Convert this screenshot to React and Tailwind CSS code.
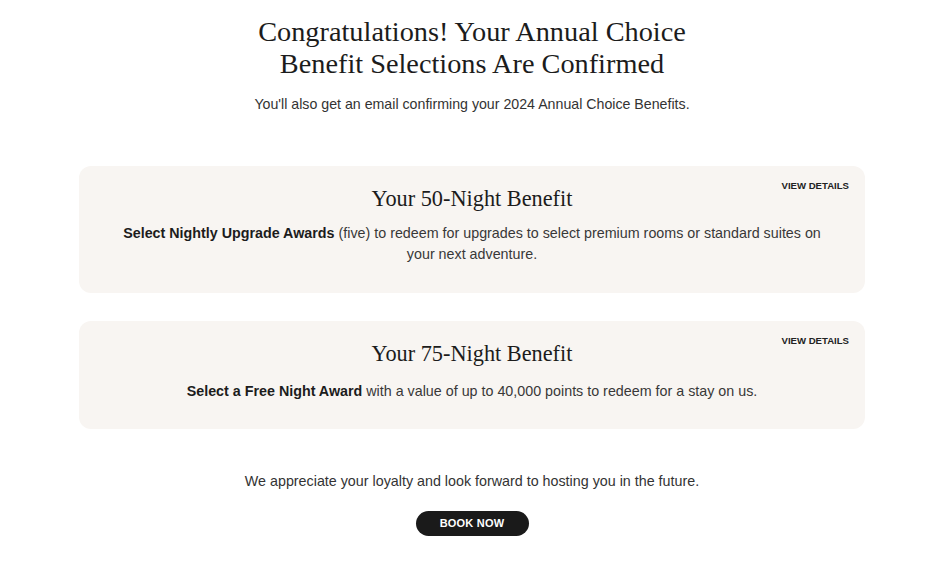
export default function App() {
  const serif = { fontFamily: '"Liberation Serif", "Times New Roman", serif' };
  return (
    <div className="w-[944px] h-[563px] bg-white flex flex-col items-center text-[#222]" style={{ fontFamily: '"Liberation Sans", Arial, sans-serif' }}>
      <h1 className="mt-[16px] text-[28.3px] leading-[32px] text-center text-[#1c1c1c]" style={serif}>
        Congratulations! Your Annual Choice
        <br />
        Benefit Selections Are Confirmed
      </h1>
      <p className="mt-[14px] text-[14.2px] leading-[20px] text-[#333]">
        You'll also get an email confirming your 2024 Annual Choice Benefits.
      </p>

      <div className="mt-[52px] w-[786px] flex flex-col gap-[28px]">
        <div className="relative rounded-[12px] bg-[#f8f5f2] px-[40px] pt-[21px] h-[127px] flex flex-col items-center">
          <span className="absolute right-[16px] top-[13px] text-[9.6px] font-semibold text-[#222]">VIEW DETAILS</span>
          <h2 className="text-[22.3px] leading-[24px] text-[#1c1c1c]" style={serif}>Your 50-Night Benefit</h2>
          <p className="mt-[12px] text-[14.3px] leading-[21px] text-center text-[#383838] max-w-[712px]">
            <span className="font-semibold text-[#1c1c1c]">Select Nightly Upgrade Awards</span> (five) to redeem for upgrades to select premium rooms or standard suites on your next adventure.
          </p>
        </div>
        <div className="relative rounded-[12px] bg-[#f8f5f2] px-[40px] pt-[21px] h-[108px] flex flex-col items-center">
          <span className="absolute right-[16px] top-[13px] text-[9.6px] font-semibold text-[#222]">VIEW DETAILS</span>
          <h2 className="text-[22.3px] leading-[24px] text-[#1c1c1c]" style={serif}>Your 75-Night Benefit</h2>
          <p className="mt-[15px] text-[14.3px] leading-[21px] text-center text-[#383838]">
            <span className="font-semibold text-[#1c1c1c]">Select a Free Night Award</span> with a value of up to 40,000 points to redeem for a stay on us.
          </p>
        </div>
      </div>

      <p className="mt-[42px] text-[14.3px] leading-[20px] text-[#333]">
        We appreciate your loyalty and look forward to hosting you in the future.
      </p>
      <button className="mt-[20px] w-[113px] h-[25px] rounded-full bg-[#1a1a1a] text-white text-[11px] font-bold tracking-[0.02em]">
        BOOK NOW
      </button>
    </div>
  );
}
